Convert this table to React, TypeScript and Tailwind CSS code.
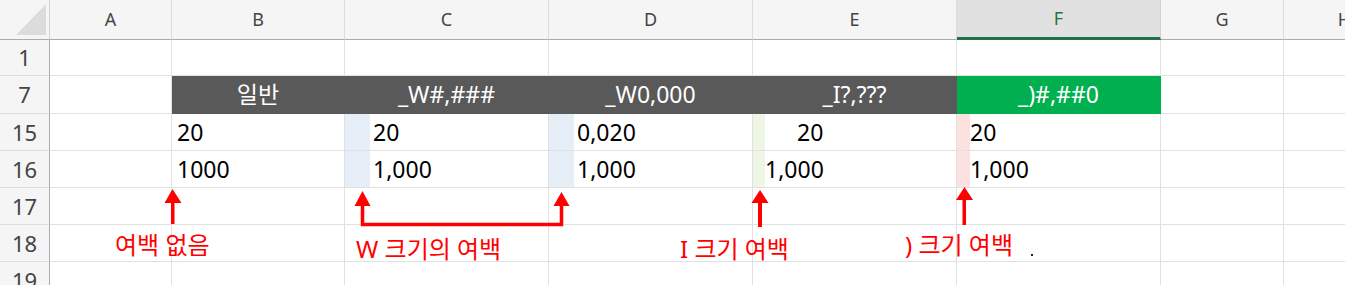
import React from 'react';

const COLS = ['A', 'B', 'C', 'D', 'E', 'F', 'G', 'H'];

type Entry = { text?: string; strip?: string; stripW?: string; pad?: string };

// rows 15 and 16: the cells after the label column (A..H)
const DATA: { row: string; cells: Entry[] }[] = [
  {
    row: '15',
    cells: [
      {},
      { text: '20', pad: 'pl-[5px]' },
      { text: '20', strip: 'bg-[#e6eef7]', stripW: 'w-[25px]', pad: 'pl-[3px]' },
      { text: '0,020', strip: 'bg-[#e6eef7]', stripW: 'w-[25px]', pad: 'pl-[3px]' },
      { text: '20', strip: 'bg-[#eef6e6]', stripW: 'w-[12px]', pad: 'pl-[32px]' },
      { text: '20', strip: 'bg-[#fde0e0]', stripW: 'w-[13px]', pad: 'pl-[0px]' },
      {},
      {},
    ],
  },
  {
    row: '16',
    cells: [
      {},
      { text: '1000', pad: 'pl-[5px]' },
      { text: '1,000', strip: 'bg-[#e6eef7]', stripW: 'w-[25px]', pad: 'pl-[3px]' },
      { text: '1,000', strip: 'bg-[#e6eef7]', stripW: 'w-[25px]', pad: 'pl-[3px]' },
      { text: '1,000', strip: 'bg-[#eef6e6]', stripW: 'w-[12px]', pad: 'pl-[0px]' },
      { text: '1,000', strip: 'bg-[#fde0e0]', stripW: 'w-[13px]', pad: 'pl-[0px]' },
      {},
      {},
    ],
  },
];

const FORMATS = ['일반', '_W#,###', '_W0,000', '_I?,???'];

const RowHead = ({ n }: { n: string }) => (
  <div className="flex items-center justify-center bg-[#f5f5f5] border-r border-b border-r-[#ababab] border-b-[#dcdcdc] text-[22px] text-[#444]">
    {n}
  </div>
);

const Blank = () => <div className="border-r border-b border-[#e1e1e1]" />;

const DataCell = ({ e }: { e: Entry }) => (
  <div className="flex items-stretch border-r border-b border-[#e1e1e1] text-[23px] text-black">
    {e.strip && <div className={`${e.stripW} ${e.strip} shrink-0`} />}
    {e.text && <div className={`flex items-center ${e.pad}`}>{e.text}</div>}
  </div>
);

const Arrows = () => (
  <svg className="absolute inset-0 pointer-events-none" width={1345} height={285}>
    <g fill="#ff0000">
      <polygon points="172.5,189 164.5,203 181.5,203" />
      <rect x={171} y={202} width={3.5} height={22} />

      <polygon points="362.5,191 354.5,206 370.5,206" />
      <polygon points="561.5,192 553.5,206 569.5,206" />

      <polygon points="760,190 751.5,203 768.5,203" />
      <rect x={758} y={202} width={4} height={25} />

      <polygon points="964.5,187 956,200 973,200" />
      <rect x={962.5} y={199} width={3.5} height={26} />
    </g>
    <path d="M362.5 205 V224.5 H561.5 V205" stroke="#ff0000" strokeWidth={3.5} fill="none" />
    <rect x={1031} y={254} width={2} height={2} fill="#222" />
  </svg>
);

const Label = ({ text, className }: { text: string; className: string }) => (
  <span className={`absolute text-[24px] leading-none text-[#ff0000] whitespace-nowrap ${className}`}>{text}</span>
);

export default function App() {
  return (
    <div className="relative w-[1345px] h-[285px] overflow-hidden bg-white font-[family-name:'Noto_Sans','Noto_Sans_CJK_KR',sans-serif]">
      <div className="grid grid-cols-[50px_122px_173px_204px_204px_204px_204px_123px_122px] grid-rows-[40px_36px_38px_37px_37px_37px_37px_37px]">
        {/* column headers */}
        <div className="relative bg-[#f5f5f5] border-r border-b border-r-[#d0d0d0] border-b-[#ababab]">
          <svg className="absolute inset-0" width={50} height={40}>
            <polygon points="16,35 46,35 46,4" fill="#dcdcdc" />
          </svg>
        </div>
        {COLS.map((c) =>
          c === 'F' ? (
            <div
              key={c}
              className="flex items-center justify-center bg-[#e1e1e1] border-r border-r-[#d0d0d0] border-b-[3px] border-b-[#217346] text-[18px] text-[#2b6f45]"
            >
              {c}
            </div>
          ) : (
            <div
              key={c}
              className="flex items-center justify-center bg-[#f5f5f5] border-r border-b border-r-[#dcdcdc] border-b-[#ababab] text-[18px] text-[#444]"
            >
              {c}
            </div>
          )
        )}

        {/* row 1 */}
        <RowHead n="1" />
        {COLS.map((c) => (
          <Blank key={c} />
        ))}

        {/* row 7: format headers */}
        <RowHead n="7" />
        <Blank />
        {FORMATS.map((f) => (
          <div
            key={f}
            className="flex items-center justify-center bg-[#595959] border-r border-b border-[#595959] text-[23px] text-white"
          >
            {f}
          </div>
        ))}
        <div className="flex items-center justify-center bg-[#00b050] border-r border-b border-[#00b050] text-[23px] text-white">
          _)#,##0
        </div>
        <Blank />
        <Blank />

        {/* rows 15, 16 */}
        {DATA.map((r) => (
          <React.Fragment key={r.row}>
            <RowHead n={r.row} />
            {r.cells.map((e, i) => (
              <DataCell key={i} e={e} />
            ))}
          </React.Fragment>
        ))}

        {/* rows 17..19 */}
        {['17', '18', '19'].map((n) => (
          <React.Fragment key={n}>
            <RowHead n={n} />
            {COLS.map((c) => (
              <Blank key={c} />
            ))}
          </React.Fragment>
        ))}
      </div>

      <Arrows />
      <Label text="여백 없음" className="left-[115px] top-[233px]" />
      <Label text="W 크기의 여백" className="left-[356px] top-[237px]" />
      <Label text="I 크기 여백" className="left-[680px] top-[237px]" />
      <Label text=") 크기 여백" className="left-[905px] top-[233px]" />
    </div>
  );
}
